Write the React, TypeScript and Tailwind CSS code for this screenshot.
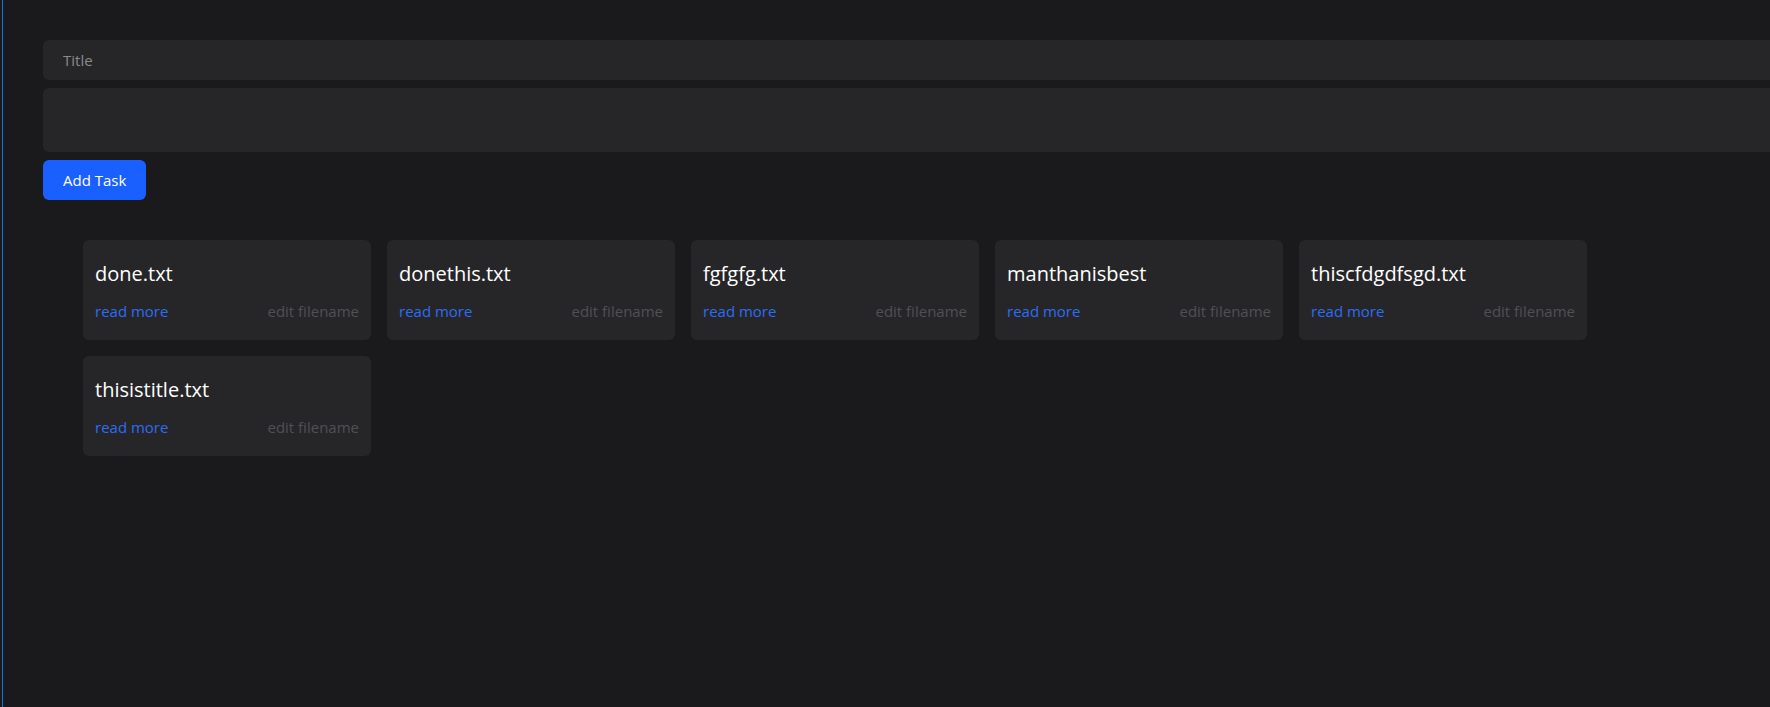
const files = [
  "done.txt",
  "donethis.txt",
  "fgfgfg.txt",
  "manthanisbest",
  "thiscfdgdfsgd.txt",
  "thisistitle.txt",
];

function FileCard({ name }: { name: string }) {
  return (
    <div className="w-72 h-[100px] rounded-md bg-[#262628] px-3 pt-[20px] flex flex-col">
      <h2 className="text-[20px] leading-7 text-white">{name}</h2>
      <div className="mt-[13px] flex justify-between text-[15px] leading-5">
        <a className="text-[#2d6cf5] cursor-pointer">read more</a>
        <button className="text-[#505055]">edit filename</button>
      </div>
    </div>
  );
}

export default function App() {
  return (
    <div
      className="min-h-screen w-full overflow-hidden bg-[#1a1a1c] pl-[2px]"
      style={{ fontFamily: '"Open Sans", sans-serif' }}
    >
      <div className="min-h-screen border-l border-[#0a78e6] pl-10 pt-10">
        <div className="flex flex-col gap-2 w-[1800px]">
          <input
            className="h-10 rounded-md bg-[#262628] px-5 text-[15px] text-white placeholder:text-[#8a8a8c] outline-none"
            placeholder="Title"
          />
          <textarea className="h-16 rounded-md bg-[#262628] px-5 py-2 text-sm text-white outline-none resize-none" />
        </div>
        <button className="mt-2 h-10 px-5 rounded-md bg-[#1a5fff] text-white text-[15px]">
          Add Task
        </button>

        <div className="ml-10 mt-10 flex flex-wrap gap-4 pr-10">
          {files.map((f) => (
            <FileCard key={f} name={f} />
          ))}
        </div>
      </div>
    </div>
  );
}
